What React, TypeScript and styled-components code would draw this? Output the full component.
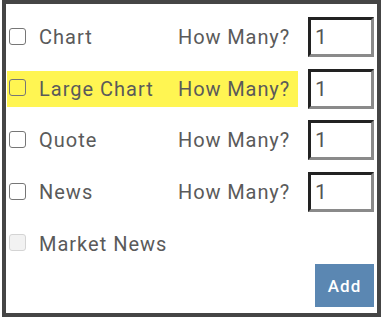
import React from "react";
import styled, { createGlobalStyle } from "styled-components";

const Global = createGlobalStyle`
  html, body { margin: 0; padding: 0; background: #fff; }
  body { font-family: Roboto, "Noto Sans", sans-serif; }
`;

const Panel = styled.div`
  box-sizing: border-box;
  margin-left: 2px;
  width: 379px;
  height: 317px;
  border: 4px solid #454545;
  background: #fff;
  padding: 13px 2px 0 1px;
  display: flex;
  flex-direction: column;
`;

const Row = styled.div`
  display: flex;
  align-items: center;
  height: 40px;
  margin-bottom: 11.7px;
`;

const LabelArea = styled.div<{ $highlight?: boolean }>`
  display: flex;
  align-items: center;
  width: 291px;
  height: 36px;
  background: ${(p) => (p.$highlight ? "#fff552" : "transparent")};
  padding-left: 2px;
  box-sizing: border-box;
`;

const Check = styled.span<{ $disabled?: boolean }>`
  box-sizing: border-box;
  width: 17px;
  height: 17px;
  border: 1.5px solid ${(p) => (p.$disabled ? "#d4d4d4" : "#767676")};
  background: ${(p) => (p.$disabled ? "#f2f2f2" : "transparent")};
  border-radius: 3px;
  flex: none;
  margin-top: -2px;
`;

const Label = styled.span`
  font-size: 20px;
  letter-spacing: 1px;
  color: #5a5a5a;
  margin-left: 13px;
  width: 139px;
  white-space: nowrap;
`;

const HowMany = styled.span`
  font-size: 20px;
  letter-spacing: 0.9px;
  color: #5a5a5a;
  white-space: nowrap;
`;

const Qty = styled.div`
  box-sizing: border-box;
  margin-left: 10px;
  width: 66px;
  height: 40px;
  border-style: solid;
  border-width: 3px;
  border-color: #222 #8a8a8a #8a8a8a #222;
  background: #fff;
  font-size: 21px;
  color: #555;
  padding-left: 4px;
  display: flex;
  align-items: center;
`;

const Footer = styled.div`
  display: flex;
  justify-content: flex-end;
  margin-top: -11px;
  padding-right: 1px;
`;

const AddButton = styled.button`
  width: 59px;
  height: 43px;
  border: none;
  background: #5b87b2;
  color: #fff;
  font-family: Roboto, sans-serif;
  font-size: 17px;
  font-weight: 500;
  letter-spacing: 1px;
  padding: 0;
`;

const items = [
  { name: "Chart", highlight: false },
  { name: "Large Chart", highlight: true },
  { name: "Quote", highlight: false },
  { name: "News", highlight: false },
];

export default function App() {
  return (
    <>
      <Global />
      <Panel>
        {items.map((it) => (
          <Row key={it.name}>
            <LabelArea $highlight={it.highlight}>
              <Check />
              <Label>{it.name}</Label>
              <HowMany>How Many?</HowMany>
            </LabelArea>
            <Qty>1</Qty>
          </Row>
        ))}
        <Row>
          <LabelArea>
            <Check $disabled />
            <Label>Market News</Label>
          </LabelArea>
        </Row>
        <Footer>
          <AddButton>Add</AddButton>
        </Footer>
      </Panel>
    </>
  );
}
